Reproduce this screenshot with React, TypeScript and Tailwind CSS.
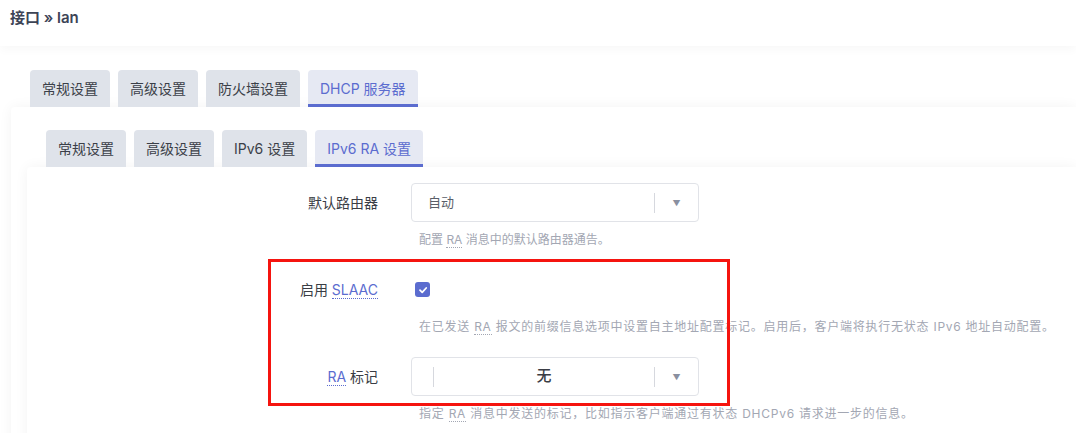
import { ReactNode } from "react";

const FONT = { fontFamily: 'Inter, "Noto Sans CJK SC", sans-serif' };

const topTabs = ["常规设置", "高级设置", "防火墙设置", "DHCP 服务器"];
const subTabs = ["常规设置", "高级设置", "IPv6 设置", "IPv6 RA 设置"];

function Tabs({ items, active }: { items: string[]; active: number }) {
    return (
        <ul className="flex gap-2 pl-[19px]">
            {items.map((t, i) => (
                <li
                    key={t}
                    className={
                        i === active
                            ? "h-[37px] px-3 flex items-center rounded-t-[4px] bg-[#e6e9f3] text-[#5b6ccf] text-[14px] border-b-[3px] border-[#5b6ccf] pt-[3px]"
                            : "h-[37px] px-3 flex items-center rounded-t-[4px] bg-[#dfe3ea] text-[#3b3f48] text-[14px]"
                    }
                >
                    {t}
                </li>
            ))}
        </ul>
    );
}

function Abbr({ children }: { children: ReactNode }) {
    return <span className="border-b border-dotted border-current leading-[14px]">{children}</span>;
}

function Caret() {
    return (
        <div className="flex items-center h-full">
            <div className="w-px h-[20px] bg-[#d6d8de]" />
            <span className="w-[43px] text-center text-[8px] text-[#8a90a0]">▼</span>
        </div>
    );
}

function Help({ children, wide }: { children: ReactNode; wide?: boolean }) {
    return (
        <div className={wide ? "pl-2 mt-[10px] text-[12px] leading-[16px] text-[#a3a7b3] tracking-[0.75px] whitespace-nowrap" : "pl-2 mt-[10px] text-[12px] leading-[16px] text-[#a3a7b3] whitespace-nowrap"}>
            {children}
        </div>
    );
}

function Row({ label, children, help, wide }: { label: ReactNode; children: ReactNode; help: ReactNode; wide?: boolean }) {
    return (
        <div className="flex mb-[22px]">
            <div className="w-[384px] shrink-0 pr-[33px] h-[39px] flex items-center justify-end text-[14px] text-[#3a3d45]">
                {label}
            </div>
            <div className="flex flex-col">
                {children}
                <Help wide={wide}>{help}</Help>
            </div>
        </div>
    );
}

export default function App() {
    return (
        <div className="relative bg-white h-[433px] overflow-hidden" style={FONT}>
            {/* Header */}
            <header className="h-[46px] px-[10px] flex items-center bg-white shadow-[0_3px_10px_rgba(0,0,0,0.035)]">
                <h2 className="text-[15px] font-semibold text-[#3d4456] -mt-[9px]">接口 » lan</h2>
            </header>

            <main className="pl-[11px] pt-[24px]">
                <Tabs items={topTabs} active={3} />

                <section className="bg-white pl-4 pt-[23px] shadow-[0_0_14px_rgba(0,0,0,0.05)] rounded-tl-[4px]">
                    <Tabs items={subTabs} active={3} />

                    <div className="bg-white pt-4 shadow-[0_0_14px_rgba(0,0,0,0.05)] rounded-tl-[4px] min-h-[300px]">
                        <Row label="默认路由器" help={<>配置 <Abbr>RA</Abbr> 消息中的默认路由器通告。</>}>
                            <div className="w-[288px] h-[39px] border border-[#e1e3e8] rounded-[4px] flex items-center justify-between pl-4">
                                <span className="text-[13px] text-[#5a5e68]">自动</span>
                                <Caret />
                            </div>
                        </Row>

                        <Row
                            wide
                            label={
                                <>
                                    启用&nbsp;<span className="text-[#5b6ccf]"><Abbr>SLAAC</Abbr></span>
                                </>
                            }
                            help={<>在已发送 <Abbr>RA</Abbr> 报文的前缀信息选项中设置自主地址配置标记。启用后，客户端将执行无状态 IPv6 地址自动配置。</>}
                        >
                            <div className="h-[39px] flex items-center pl-1">
                                <div className="w-[15px] h-[15px] rounded-[3px] bg-[#5b6ccf] flex items-center justify-center">
                                    <svg width="10" height="10" viewBox="0 0 10 10" fill="none">
                                        <path d="M2 5.2 L4.2 7.3 L8.2 3" stroke="white" strokeWidth="1.8" strokeLinecap="round" strokeLinejoin="round" />
                                    </svg>
                                </div>
                            </div>
                        </Row>

                        <Row
                            wide
                            label={
                                <>
                                    <span className="text-[#5b6ccf]"><Abbr>RA</Abbr></span>&nbsp;标记
                                </>
                            }
                            help={<>指定 <Abbr>RA</Abbr> 消息中发送的标记，比如指示客户端通过有状态 DHCPv6 请求进一步的信息。</>}
                        >
                            <div className="w-[288px] h-[39px] border border-[#e1e3e8] rounded-[4px] flex items-center pl-[21px]">
                                <div className="w-px h-[20px] bg-[#d6d8de]" />
                                <span className="flex-1 text-center text-[15px] font-medium text-[#3a3d45]">无</span>
                                <Caret />
                            </div>
                        </Row>
                    </div>
                </section>
            </main>

            {/* red highlight overlay */}
            <div className="absolute left-[268px] top-[259px] w-[462px] h-[147px] border-[3px] border-[#f5140f] pointer-events-none" />
        </div>
    );
}
